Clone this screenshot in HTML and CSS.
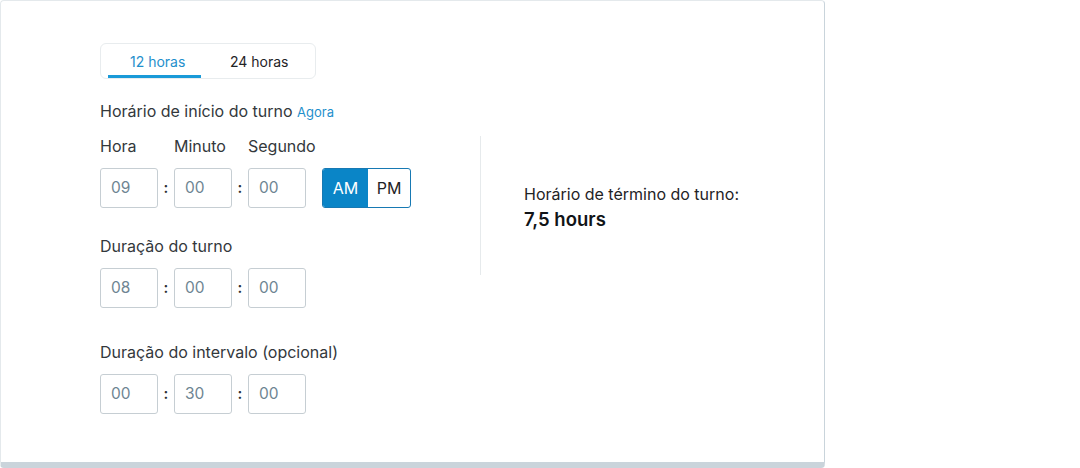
FILE: index.html
```html
<!DOCTYPE html>
<html lang="pt">
<head>
<meta charset="utf-8">
<link rel="stylesheet" href="styles.css">
</head>
<body>
<div class="card">
  <div class="tabs">
    <div class="tab tab-active">12 horas</div>
    <div class="tab tab-second">24 horas</div>
  </div>
  <div class="start-label">Horário de início do turno <span class="link">Agora</span></div>
  <div class="row">
    <div class="left">
      <div class="grid labels">
        <span>Hora</span><span></span><span>Minuto</span><span></span><span>Segundo</span>
      </div>
      <div class="grid inputs">
        <div class="inp">09</div><div class="colon">:</div><div class="inp">00</div><div class="colon">:</div><div class="inp">00</div>
        <div class="spacer"></div>
        <div class="ampm"><div class="am">AM</div><div class="pm">PM</div></div>
      </div>
      <div class="sec-label first">Duração do turno</div>
      <div class="grid inputs">
        <div class="inp">08</div><div class="colon">:</div><div class="inp">00</div><div class="colon">:</div><div class="inp">00</div>
      </div>
      <div class="sec-label second">Duração do intervalo (opcional)</div>
      <div class="grid inputs">
        <div class="inp">00</div><div class="colon">:</div><div class="inp">30</div><div class="colon">:</div><div class="inp">00</div>
      </div>
    </div>
    <div class="right">
      <div class="end-label">Horário de término do turno:</div>
      <div class="end-value">7,5 hours</div>
    </div>
  </div>
</div>
</body>
</html>
```
FILE: styles.css
```css
html, body {
  margin: 0;
  padding: 0;
  background: #ffffff;
}
body {
  font-family: Inter, "Noto Sans", sans-serif;
  color: #2b2f33;
  width: 1080px;
  height: 468px;
  overflow: hidden;
}
.card {
  box-sizing: border-box;
  width: 825px;
  height: 468px;
  border: 1px solid #e4e9ec;
  border-right-color: #c9d4db;
  border-bottom: 6px solid #cad4db;
  border-radius: 4px;
  padding: 42px 0 0 99px;
}
.tabs {
  box-sizing: border-box;
  display: flex;
  width: 216px;
  height: 36px;
  border: 1px solid #e8ecee;
  border-radius: 6px;
  padding: 0 7px;
}
.tab {
  box-sizing: border-box;
  height: 34px;
  font-size: 14px;
  color: #1f2326;
  border-bottom: 3px solid transparent;
  line-height: 35px;
}
.tab-active {
  width: 93px;
  padding-left: 22px;
  color: #1f8fcc;
  border-bottom-color: #1a9ad8;
}
.tab-second {
  padding-left: 29px;
}
.start-label {
  margin-top: 22px;
  font-size: 16px;
  line-height: 20px;
  color: #33383c;
}
.link {
  font-size: 13px;
  color: #1f8fcc;
}
.row {
  display: flex;
  margin-top: 14px;
}
.left {
  width: 380px;
}
.grid {
  display: grid;
  grid-template-columns: 58px 16px 58px 16px 58px 16px auto;
  align-items: center;
}
.labels {
  font-size: 16px;
  line-height: 20px;
  color: #33383c;
  margin-bottom: 12px;
}
.inputs {
  height: 40px;
}
.inp {
  box-sizing: border-box;
  height: 40px;
  border: 1px solid #c6ced3;
  border-radius: 3px;
  padding-left: 10px;
  font-size: 15.5px;
  line-height: 38px;
  color: #6e8592;
}
.colon {
  text-align: center;
  font-size: 15px;
  font-weight: 600;
  color: #2b2f33;
  line-height: 38px;
}
.ampm {
  box-sizing: border-box;
  display: flex;
  width: 89px;
  height: 40px;
  border: 1px solid #1779b3;
  border-radius: 3px;
  overflow: hidden;
  font-size: 16px;
}
.am {
  width: 45px;
  background: #0a85c7;
  color: #ffffff;
  text-align: center;
  line-height: 38px;
}
.pm {
  flex: 1;
  text-align: center;
  line-height: 38px;
  color: #1f2326;
}
.sec-label {
  font-size: 16px;
  line-height: 20px;
  color: #33383c;
  margin-bottom: 12px;
}
.sec-label.first {
  margin-top: 28px;
}
.sec-label.second {
  margin-top: 34px;
}
.right {
  box-sizing: border-box;
  height: 139px;
  border-left: 1px solid #e6eaec;
  padding-left: 43px;
  display: flex;
  flex-direction: column;
  justify-content: center;
  padding-top: 3px;
}
.end-label {
  font-size: 16px;
  line-height: 20px;
  color: #1f2326;
}
.end-value {
  margin-top: 3px;
  font-size: 18.5px;
  font-weight: 600;
  line-height: 24px;
  color: #111417;
}
```
